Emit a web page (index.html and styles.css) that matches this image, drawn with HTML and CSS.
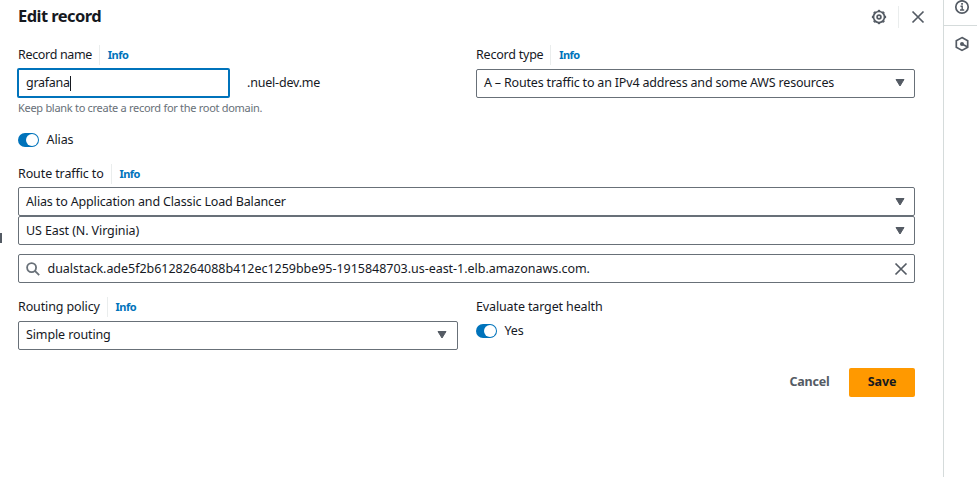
FILE: index.html
```html
<!DOCTYPE html>
<html lang="en">
<head>
<meta charset="utf-8">
<title>Edit record</title>
<link rel="stylesheet" href="styles.css">
</head>
<body>
<main class="panel">
  <header class="header">
    <h1 class="title">Edit record</h1>
    <div class="actions">
      <button class="icon-btn" aria-label="Settings">
        <svg width="16" height="16" viewBox="0 0 16 16"><circle class="stroke" cx="8" cy="8" r="5.500"/><circle class="stroke teeth" cx="8" cy="8" r="6.500" pathLength="80"/><circle class="stroke" cx="8" cy="8" r="1.900"/></svg>
      </button>
      <button class="icon-btn close" aria-label="Close">
        <svg width="16" height="16" viewBox="0 0 16 16"><path class="stroke" d="M2.500 2.500l11 11M13.500 2.500l-11 11"/></svg>
      </button>
    </div>
  </header>

  <section class="columns">
    <div>
      <div class="label"><span class="t-name">Record name</span><a class="info">Info</a></div>
      <div class="name-row">
        <div class="input"><span class="t-graf">grafana</span><i class="caret"></i></div>
        <span class="domain">.nuel-dev.me</span>
      </div>
      <p class="hint">Keep blank to create a record for the root domain.</p>
    </div>
    <div>
      <div class="label"><span class="t-type">Record type</span><a class="info">Info</a></div>
      <div class="select"><span class="t-a">A – Routes traffic to an IPv4 address and some AWS resources</span><svg class="arrow" width="10" height="8" viewBox="0 0 10 8"><path d="M1 .5h8L5 7z"/></svg></div>
    </div>
  </section>

  <div class="toggle-row alias"><span class="toggle"></span><span class="t-alias">Alias</span></div>

  <section class="route">
    <div class="label"><span class="t-route">Route traffic to</span><a class="info">Info</a></div>
    <div class="select"><span class="t-lb">Alias to Application and Classic Load Balancer</span><svg class="arrow" width="10" height="8" viewBox="0 0 10 8"><path d="M1 .5h8L5 7z"/></svg></div>
    <div class="select"><span class="t-us">US East (N. Virginia)</span><svg class="arrow" width="10" height="8" viewBox="0 0 10 8"><path d="M1 .5h8L5 7z"/></svg></div>
    <div class="select search">
      <svg class="glass" width="14" height="14" viewBox="0 0 14 14"><circle cx="5.600" cy="5.600" r="4.500"/><path d="M8.900 8.900l4.300 4.300"/></svg>
      <span class="t-dual">dualstack.ade5f2b6128264088b412ec1259bbe95-1915848703.us-east-1.elb.amazonaws.com.</span>
      <svg class="clear" width="14" height="14" viewBox="0 0 14 14"><path class="stroke" d="M1.500 1.500l11 11M12.500 1.500l-11 11"/></svg>
    </div>
  </section>

  <section class="columns policy">
    <div>
      <div class="label policy-label"><span class="t-policy">Routing policy</span><a class="info">Info</a></div>
      <div class="select"><span class="t-simple">Simple routing</span><svg class="arrow" width="10" height="8" viewBox="0 0 10 8"><path d="M1 .5h8L5 7z"/></svg></div>
    </div>
    <div>
      <div class="label"><span class="t-eval">Evaluate target health</span></div>
      <div class="toggle-row"><span class="toggle"></span><span class="t-yes">Yes</span></div>
    </div>
  </section>

  <footer class="footer">
    <button class="btn cancel">Cancel</button>
    <button class="btn save">Save</button>
  </footer>
</main>
<aside class="rail">
  <div class="rail-item first">
    <svg width="16" height="16" viewBox="0 0 16 16"><circle class="stroke" cx="8" cy="8" r="6.200"/><path class="stroke thin" d="M6.500 7.200H8.200V11M6 11h4.200"/><path class="fill" d="M7.200 4h1.700v1.700H7.200z"/></svg>
  </div>
  <div class="rail-item">
    <svg width="16" height="16" viewBox="0 0 16 16"><path class="stroke" d="M8 1.600l5.700 3.200v6.400L8 14.400l-5.700-3.200V4.800z"/><circle class="fill" cx="8" cy="8" r="2"/><path class="stroke" d="M8 8l5.200 2.800"/></svg>
  </div>
</aside>
<i class="grip"></i>
</body>
</html>
```
FILE: styles.css
```css
* { box-sizing: border-box; }
body {
  margin: 0;
  width: 977px;
  height: 477px;
  display: flex;
  position: relative;
  overflow: hidden;
  background: #fff;
  color: #16191f;
  font: 12.5px/20px "Noto Sans", "Open Sans", sans-serif;
  white-space: nowrap;
}
.panel { width: 943px; padding: 0 28px 0 18px; }
.header { height: 45px; display: flex; justify-content: space-between; align-items: flex-start; }
.title { margin: 5px 0 0; font-size: 16.5px; line-height: 22px; font-weight: 700; letter-spacing: -.56px; }
.actions { display: flex; margin-top: 6px; }
.icon-btn { border: 0; padding: 0; background: none; height: 22px; display: flex; align-items: center; }
.icon-btn svg { display: block; }
.close { margin-left: 11px; padding-left: 11px; margin-right: -11px; width: 28px; border-left: 1px solid #eaeded; }
.stroke { fill: none; stroke: #545b64; stroke-width: 1.7; }
.teeth { stroke-width: 1.3; stroke-dasharray: 5 5; stroke-dashoffset: 2.5; }
.thin { stroke-width: 1.4; }
.fill { fill: #545b64; }

.t-name { letter-spacing: -.33px; }
.t-graf { letter-spacing: -.28px; }
.t-type { letter-spacing: -.22px; }
.t-a { letter-spacing: -.185px; }
.t-route { letter-spacing: -.11px; }
.t-lb { letter-spacing: -.15px; }
.t-us { letter-spacing: -.1px; }
.t-dual { letter-spacing: -.03px; }
.t-policy { letter-spacing: -.12px; }
.t-simple { letter-spacing: -.12px; }
.t-eval { letter-spacing: -.13px; }
.t-alias, .t-yes { letter-spacing: -.1px; }

.columns { display: grid; grid-template-columns: 440px 439px; column-gap: 18px; }
.label { height: 20px; display: flex; margin-bottom: 4px; }
.info { margin-left: 7px; padding-left: 7.7px; border-left: 1px solid #eaeded; color: #0073bb; font-size: 11px; font-weight: 700; letter-spacing: -.5px; }
.name-row { display: flex; align-items: center; height: 30px; margin-top: -1px; }
.input { width: 213px; height: 30px; margin-left: -1px; padding-left: 7px; display: flex; align-items: center; border: 2px solid #0073bb; border-radius: 2px; }
.caret { width: 1px; height: 15px; background: #16191f; }
.domain { margin-left: 17px; letter-spacing: -.2px; }
.hint { margin: 1px 0 0; font-size: 11px; line-height: 18px; color: #687078; letter-spacing: -.29px; }
.select { height: 29px; display: flex; align-items: center; justify-content: space-between; border: 1px solid #687078; border-radius: 2px; padding: 0 9px 1px 7px; }
.arrow { fill: #545b64; stroke: #545b64; stroke-linejoin: round; }

.toggle-row { height: 20px; display: flex; align-items: center; }
.alias { margin-top: 13px; }
.toggle { width: 21px; height: 14px; margin-right: 7.5px; padding: 1px; border-radius: 7px; background: #0073bb; display: flex; justify-content: flex-end; }
.toggle::after { content: ""; width: 12px; height: 12px; border-radius: 50%; background: #fff; }
.route { margin-top: 14px; }
.route .label { margin-bottom: 3px; }
.route .select { padding-top: 1px; padding-bottom: 0; }
.route .search { margin-top: 9px; padding-right: 6px; }
.glass { fill: none; stroke: #687078; stroke-width: 1.8; margin-right: 7.5px; margin-top: -1px; }
.clear { margin-left: auto; margin-top: -1px; }
.policy { margin-top: 14px; }
.policy .select { padding-right: 10px; }
.footer { margin-top: 18px; display: flex; justify-content: flex-end; }
.btn { height: 29px; border: 0; border-radius: 2px; background: none; padding: 0 0 2px; font: 700 12.5px/27px "Noto Sans", sans-serif; color: #545b64; letter-spacing: -.2px; }
.cancel { width: 79px; }
.save { width: 66px; background: #ff9900; color: #16191f; letter-spacing: -.1px; }

.rail { flex: 1; border-left: 1px solid #d5dbdb; }
.rail-item { height: 37px; padding: 10px 0 0 10px; }
.rail-item svg { display: block; }
.first { height: 26px; padding-top: 0; border-bottom: 1px solid #d5dbdb; }
.first { height: 26.5px; }
.first svg { margin-top: -1px; }
.grip { position: absolute; left: 0; top: 233px; width: 2px; height: 10px; background: #545b64; }
```
